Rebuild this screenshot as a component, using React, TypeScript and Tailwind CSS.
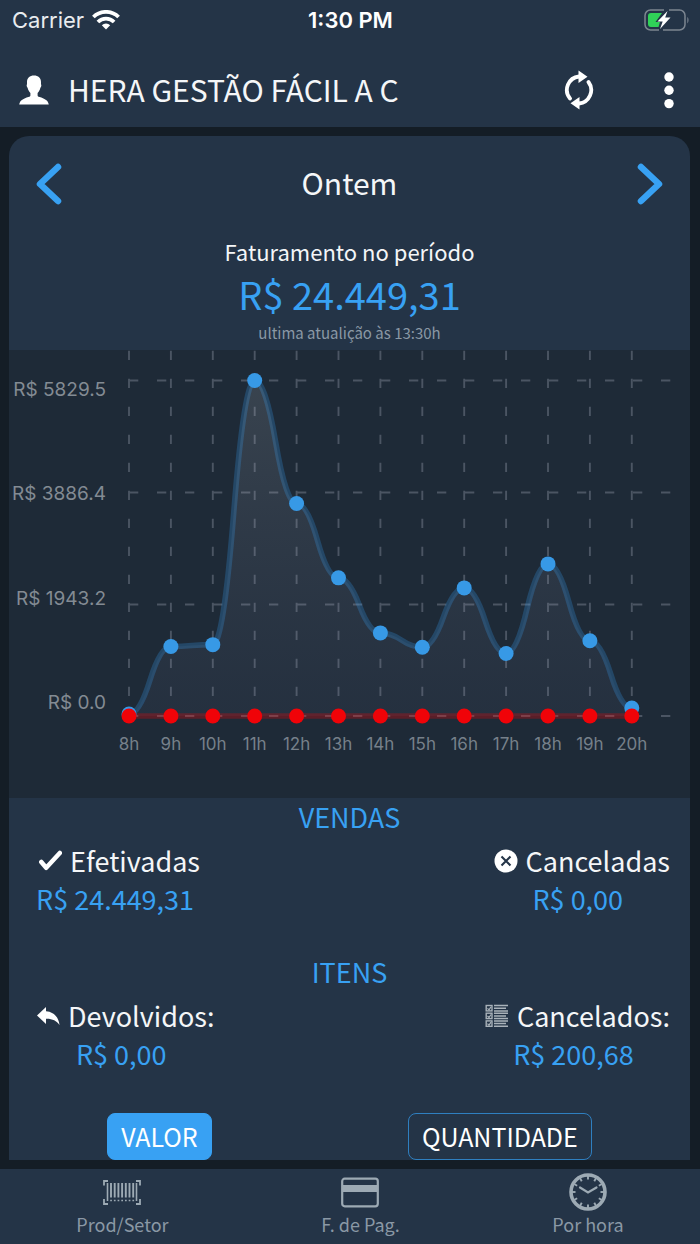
import type { ReactNode } from "react";

const hours = ["8h", "9h", "10h", "11h", "12h", "13h", "14h", "15h", "16h", "17h", "18h", "19h", "20h"];
const sales = [35, 1208, 1240, 5829.5, 3693, 2400, 1444, 1195, 2226, 1087, 2643, 1308, 140];
const max = 5829.5;

const left = 120;
const step = 41.9;
const top = 30.5;
const bottom = 366;

const px = (i: number) => left + i * step;
const py = (v: number) => bottom - (v / max) * (bottom - top);

function curve(values: number[]) {
  let d = `M${px(0)},${py(values[0])}`;
  for (let i = 0; i < values.length - 1; i++) {
    const x1 = px(i);
    const x2 = px(i + 1);
    const y1 = py(values[i]);
    const y2 = py(values[i + 1]);
    const mx = (x1 + x2) / 2;
    const my = (y1 + y2) / 2;
    d += ` Q${(mx + x1) / 2},${y1} ${mx},${my} Q${(mx + x2) / 2},${y2} ${x2},${y2}`;
  }
  return d;
}

function SalesChart() {
  const line = curve(sales);
  const rows = [
    { label: "R$ 5829.5", y: 30.5 },
    { label: "R$ 3886.4", y: 142.5 },
    { label: "R$ 1943.2", y: 254.5 },
    { label: "R$ 0.0", y: 366 },
  ];

  return (
    <svg
      viewBox="0 0 681 448"
      role="img"
      aria-label="Faturamento por hora"
      className="block w-full bg-[#1e2a37] font-['Inter','Liberation_Sans',sans-serif]"
    >
      <defs>
        <linearGradient id="area" x1="0" y1="30" x2="0" y2="366" gradientUnits="userSpaceOnUse">
          <stop offset="0" stopColor="#ffffff" stopOpacity="0.12" />
          <stop offset="1" stopColor="#8f93c0" stopOpacity="0.06" />
        </linearGradient>
      </defs>

      {/* Grid */}
      <g stroke="#4b5563" strokeWidth="1.9" strokeDasharray="9.3 18.7">
        {rows.map((r) => (
          <line key={r.label} x1={left} y1={r.y} x2="672" y2={r.y} />
        ))}
        {hours.map((h, i) => (
          <line key={h} x1={px(i)} y1="0.7" x2={px(i)} y2={bottom} />
        ))}
      </g>

      {/* Axis labels */}
      <g fill="#838b93" fontSize="19" textAnchor="end">
        {rows.map((r, i) => (
          <text key={r.label} x="97" y={46 + i * 104.4}>
            {r.label}
          </text>
        ))}
      </g>
      <g fill="#76808a" fontSize="17" textAnchor="middle">
        {hours.map((h, i) => (
          <text key={h} x={px(i)} y="400">
            {h}
          </text>
        ))}
      </g>

      {/* Series */}
      <path d={`${line} L${px(12)},${bottom} L${left},${bottom} Z`} fill="url(#area)" />
      <path d={line} fill="none" stroke="#38a1f3" strokeOpacity="0.25" strokeWidth="5.6" />
      <line x1={left} y1={bottom} x2={px(12)} y2={bottom} stroke="#ff0000" strokeOpacity="0.27" strokeWidth="5.6" />
      {sales.map((v, i) => (
        <circle key={hours[i]} cx={px(i)} cy={py(v)} r="7.5" fill="#3799e6" />
      ))}
      {hours.map((h, i) => (
        <circle key={h} cx={px(i)} cy={bottom} r="7.5" fill="#f00308" />
      ))}
    </svg>
  );
}

function StatusBar() {
  return (
    <div className="grid h-10 grid-cols-3 items-center pr-[11px] pl-3 font-['Inter','Liberation_Sans',sans-serif] text-[22px] leading-6 text-white">
      <div className="flex items-center gap-2">
        <span className="text-[#e9ecef]">Carrier</span>
        <svg viewBox="0 0 28 20" className="h-5 w-7" fill="none" stroke="#fff" strokeWidth="3.8">
          <path d="M1.4 7a18 18 0 0 1 25.2 0" />
          <path d="M5.9 12a11.600 11.600 0 0 1 16.200 0" />
          <path d="M14 19.500l-4.200-4.300a6 6 0 0 1 8.400 0z" fill="#fff" stroke="none" />
        </svg>
      </div>
      <span className="text-center font-semibold">1:30 PM</span>
      <svg viewBox="0 0 45 22" className="h-[22px] w-[45px] justify-self-end" fill="none">
        <path
          d="M20 1H6.500A5.500 5.500 0 0 0 1 6.500v9A5.500 5.500 0 0 0 6.500 21H15M25 1h10.500A5.500 5.500 0 0 1 41 6.500v9a5.500 5.500 0 0 1-5.500 5.500H19"
          stroke="#7c8590"
          strokeWidth="1.5"
        />
        <path d="M43.300 8c1.600 1 1.600 5 0 6.500z" fill="#7c8590" />
        <path d="M7 4h11l-6.500 9h4.500l-1.500 5H7a3 3 0 0 1-3-3V7a3 3 0 0 1 3-3z" fill="#30d158" />
        <path d="M23.500 2L13.500 12.500h5.200L16 20l10.500-11.500h-5.300z" fill="#fff" />
      </svg>
    </div>
  );
}

function TitleBar() {
  return (
    <div className="flex h-[87px] items-center pt-3 pr-5 pl-[19px]">
      <svg viewBox="0 0 30 30" className="h-[30px] w-[30px]" fill="#fff">
        <path d="M15 .5c4.300 0 7 2.500 7 6.500 0 1.200-.1 2 .1 2.600.5.800.2 2.400-.7 3.200-.6 2.400-1.600 4-2.800 5.200v2.200c0 1 .6 1.400 2 1.900 4.800 1.600 8.300 3 9.200 7.400H.200c.9-4.400 4.400-5.800 9.200-7.400 1.400-.5 2-.9 2-1.900V18c-1.200-1.200-2.200-2.800-2.800-5.200-.9-.8-1.200-2.400-.7-3.200.2-.6.1-1.400.1-2.600 0-4 2.700-6.500 7-6.500z" />
      </svg>
      <h1 className="ml-[19px] flex-1 pb-0.5 text-[30px] leading-10 text-[#f4f6f8]">HERA GESTÃO FÁCIL A C</h1>
      <button aria-label="Atualizar">
        <svg viewBox="0 0 32 40" className="h-10 w-8" fill="none" stroke="#fff" strokeWidth="3.8" strokeLinecap="round">
          <path d="M7 28.500A13.500 13.500 0 0 1 16 6.500" />
          <path d="M25.500 12A13.500 13.500 0 0 1 16 33.500" />
          <path d="M15.500.5v12.500l9-6.200zM16.500 39.500V27l-9 6.200z" fill="#fff" stroke="none" />
        </svg>
      </button>
      <button aria-label="Menu" className="ml-[63px]">
        <svg viewBox="0 0 22 38" className="h-[38px] w-[22px]" fill="#fff">
          <circle cx="11" cy="6" r="4.700" />
          <circle cx="11" cy="19.300" r="4.700" />
          <circle cx="11" cy="32.600" r="4.700" />
        </svg>
      </button>
    </div>
  );
}

function Chevron({ d }: { d: string }) {
  return (
    <svg viewBox="0 0 26 42" className="h-[42px] w-[26px]" fill="none" stroke="#38a1f3" strokeWidth="6.5" strokeLinecap="round" strokeLinejoin="round">
      <path d={d} />
    </svg>
  );
}

const checkIcon = (
  <svg viewBox="0 0 24 22" className="h-[22px] w-6" fill="none" stroke="#fff" strokeWidth="4.5" strokeLinejoin="round">
    <path d="M3.300 12l4.900 5.800L21.800 3" strokeLinecap="round" />
  </svg>
);

const cancelIcon = (
  <svg viewBox="0 0 24 24" className="h-6 w-6">
    <circle cx="12" cy="12" r="11.5" fill="#fff" />
    <path d="M7.500 7.500l9 9M16.500 7.500l-9 9" stroke="#243447" strokeWidth="2.1" />
  </svg>
);

const replyIcon = (
  <svg viewBox="0 0 24 20" className="h-5 w-6" fill="#fff">
    <path d="M10 1v4.200C17 5.500 22.500 10.500 23.500 19c-3-4.300-7.300-6.500-13.500-6.300V18L1 9.500z" />
  </svg>
);

const listIcon = (
  <svg viewBox="0 0 24 24" className="h-6 w-6" fill="none" stroke="#a9b2ba">
    {[1.5, 9.2, 16.9].map((y) => (
      <g key={y}>
        <rect x="1.2" y={y} width="5.8" height="5.400" strokeWidth="1.400" />
        <path d={`M2.500 ${y + 2.800}l1.500 1.500 2-3`} strokeWidth="1.200" />
        <path d={`M9 ${y}h14M9 ${y + 2.700}h12M9 ${y + 5.400}h14`} strokeWidth="1.500" />
      </g>
    ))}
  </svg>
);

function Stat({ icon, label, value }: { icon: ReactNode; label: string; value: string }) {
  return (
    <div className="flex flex-col items-center">
      <div className="flex items-center gap-2 text-[27px] leading-[38px] text-[#f4f6f8]">
        {icon}
        <span>{label}</span>
      </div>
      <p className="pr-2 text-[27px] leading-[38px] text-[#38a1f3]">{value}</p>
    </div>
  );
}

const barcodeIcon = (
  <svg viewBox="0 0 38 38" className="h-[38px] w-[38px]" fill="none" stroke="#9daab4">
    <path d="M1 12.500V8h4M33 8h4v4.500M37 26v5h-4M5 31H1v-5" strokeWidth="1.8" />
    <path d="M4.500 10v18M33.500 10v18" strokeWidth="1.6" />
    <path d="M8 10v14.500M11.700 10v14.500M15.400 10v14.500M19.100 10v14.500M22.800 10v14.500M26.500 10v14.500M30.200 10v14.500" strokeWidth="1.9" />
    <path d="M7.200 27.500h24" strokeWidth="1.3" strokeDasharray="1.7 2" />
  </svg>
);

const cardIcon = (
  <svg viewBox="0 0 38 38" className="h-[38px] w-[38px]">
    <rect x="1.200" y="5.700" width="35.600" height="27.600" rx="2.500" fill="none" stroke="#9daab4" strokeWidth="2.2" />
    <path d="M1 12h36v7H1z" fill="#9daab4" />
  </svg>
);

const clockIcon = (
  <svg viewBox="0 0 38 38" className="h-[38px] w-[38px]" fill="none" stroke="#9daab4">
    <circle cx="19" cy="19" r="17" strokeWidth="3.6" />
    {[0, 30, 60, 90, 120, 150, 180, 210, 240, 270, 300, 330].map((a) => (
      <path key={a} d="M19 3v3.500" strokeWidth="1.9" transform={`rotate(${a} 19 19)`} />
    ))}
    <path d="M11 14.500l8 5 8.500-5" strokeWidth="2.2" strokeLinecap="round" />
  </svg>
);

const tabs = [
  { label: "Prod/Setor", icon: barcodeIcon },
  { label: "F. de Pag.", icon: cardIcon },
  { label: "Por hora", icon: clockIcon },
];

export default function App() {
  return (
    <div className="min-h-screen bg-[#141d26] font-['Noto_Sans_CJK_JP','Noto_Sans_CJK_SC',sans-serif]">
      <header className="bg-[#243447]">
        <StatusBar />
        <TitleBar />
      </header>

      <main className="py-[9px] pr-2.5 pl-[9px]">
        <div className="overflow-hidden rounded-t-[20px] bg-[#243447]">
          <div className="flex h-[95px] items-center justify-between px-[27px]">
            <button aria-label="Dia anterior">
              <Chevron d="M22 4L4 21l18 17" />
            </button>
            <h2 className="pb-1 text-[30px] leading-10 text-[#f4f6f8]">Ontem</h2>
            <button aria-label="Próximo dia">
              <Chevron d="M4 4l18 17L4 38" />
            </button>
          </div>

          <div className="pb-0.5 text-center">
            <p className="text-[22px] leading-10 text-[#f4f6f8]">Faturamento no período</p>
            <p className="text-[38px] leading-[46px] text-[#38a1f3]">R$ 24.449,31</p>
            <p className="text-[15px] leading-[31px] text-[#8a98a5]">ultima atualição às 13:30h</p>
          </div>

          <SalesChart />

          <section>
            <h3 className="text-center text-[27px] leading-[38px] text-[#38a1f3]">VENDAS</h3>
            <div className="mt-1.5 flex justify-between pr-5 pl-[27px]">
              <Stat icon={checkIcon} label="Efetivadas" value="R$ 24.449,31" />
              <Stat icon={cancelIcon} label="Canceladas" value="R$ 0,00" />
            </div>
          </section>

          <section className="mt-[35px]">
            <h3 className="text-center text-[27px] leading-[38px] text-[#38a1f3]">ITENS</h3>
            <div className="mt-1.5 flex justify-between pr-5 pl-[27px]">
              <Stat icon={replyIcon} label="Devolvidos:" value="R$ 0,00" />
              <Stat icon={listIcon} label="Cancelados:" value="R$ 200,68" />
            </div>
          </section>

          <div className="mt-10 flex justify-around text-[25px] leading-[45px] text-white">
            <button className="rounded-lg border border-[#38a1f3] bg-[#38a1f3] px-[13px]">VALOR</button>
            <button className="rounded-lg border border-[#2f7fc0] px-[13px]">QUANTIDADE</button>
          </div>
        </div>
      </main>

      <nav className="flex justify-around bg-[#243447] pt-1 pb-[7px]">
        {tabs.map((t) => (
          <button key={t.label} className="flex flex-col items-center text-[18px] leading-[26px] text-[#8a98a5]">
            {t.icon}
            {t.label}
          </button>
        ))}
      </nav>
    </div>
  );
}
